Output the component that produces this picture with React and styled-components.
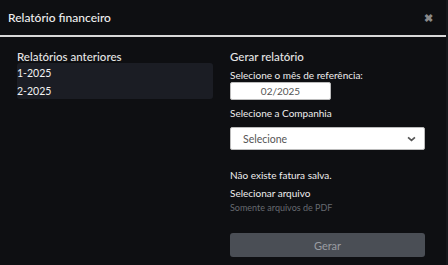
import React from "react";
import styled, { createGlobalStyle } from "styled-components";

const GlobalStyle = createGlobalStyle`
  html, body {
    margin: 0;
    padding: 0;
    background: #0e0f12;
  }
  body {
    font-family: Lato, "Open Sans", sans-serif;
    color: #e6e6e6;
  }
`;

const Modal = styled.div`
  width: 448px;
  height: 265px;
  background: #0e0f12;
  display: flex;
  flex-direction: column;
  box-sizing: border-box;
  border-right: 2px solid #15171b;
`;

const Header = styled.div`
  display: flex;
  align-items: center;
  justify-content: space-between;
  padding: 0 13px 0 8px;
  border-bottom: 2px solid #d8d8d8;
  box-sizing: border-box;
  height: 37px;
`;

const Title = styled.h1`
  margin: 0;
  font-size: 12px;
  font-weight: 500;
  color: #f0f0f0;
`;

const Close = styled.span`
  font-size: 11px;
  font-weight: 700;
  color: #8a8a8a;
  line-height: 1;
`;

const Body = styled.div`
  display: grid;
  grid-template-columns: 196px 195px;
  column-gap: 17px;
  padding: 13px 0 0 17px;
`;

const Column = styled.div`
  display: flex;
  flex-direction: column;
`;

const SectionTitle = styled.h2`
  margin: 0 0 ${(p) => p.gap || 0}px;
  font-size: 11.5px;
  font-weight: 500;
  color: #e6e6e6;
`;

const List = styled.div`
  background: #1b1d24;
  border-radius: 3px;
  padding: 4px 0 1px;
  display: flex;
  flex-direction: column;
  gap: 5px;
`;

const ListItem = styled.div`
  font-size: 10.5px;
  color: #f2f2f2;
  height: 13px;
  line-height: 13px;
`;

const Label = styled.label`
  font-size: 10px;
  color: #eeeeee;
  margin-bottom: ${(p) => p.mb || 0}px;
`;

const MonthInput = styled.div`
  width: 101px;
  height: 18px;
  box-sizing: border-box;
  background: #fff;
  border-radius: 2px;
  border: 1px solid #bbb;
  color: #555;
  font-size: 10px;
  display: flex;
  align-items: center;
  justify-content: center;
  margin-bottom: 7px;
`;

const Select = styled.div`
  height: 23px;
  box-sizing: border-box;
  background: #fff;
  border-radius: 2px;
  border: 1px solid #bbb;
  display: flex;
  align-items: center;
  justify-content: space-between;
  padding: 0 8px 0 12px;
  color: #555;
  font-size: 10.5px;
  margin-bottom: 19px;
`;

const Muted = styled.span`
  font-size: 9px;
  color: #666a70;
  margin-top: 3px;
  margin-bottom: 20px;
`;

const Button = styled.button`
  height: 24px;
  border: none;
  border-radius: 3px;
  background: #4a4e55;
  color: #9a9da2;
  font-family: inherit;
  font-size: 11px;
`;

function Chevron() {
  return (
    <svg width="9" height="6" viewBox="0 0 10 7">
      <path d="M1 1.5 L5 5 L9 1.5" stroke="#555" strokeWidth="2" fill="none" />
    </svg>
  );
}

export default function App() {
  return (
    <>
      <GlobalStyle />
      <Modal>
        <Header>
          <Title>Relatório financeiro</Title>
          <Close>✖</Close>
        </Header>
        <Body>
          <Column>
            <SectionTitle>Relatórios anteriores</SectionTitle>
            <List>
              <ListItem>1-2025</ListItem>
              <ListItem>2-2025</ListItem>
            </List>
          </Column>
          <Column>
            <SectionTitle gap={6}>Gerar relatório</SectionTitle>
            <Label mb={1}>Selecione o mês de referência:</Label>
            <MonthInput>02/2025</MonthInput>
            <Label mb={8}>Selecione a Companhia</Label>
            <Select>
              Selecione
              <Chevron />
            </Select>
            <Label mb={6}>Não existe fatura salva.</Label>
            <Label>Selecionar arquivo</Label>
            <Muted>Somente arquivos de PDF</Muted>
            <Button>Gerar</Button>
          </Column>
        </Body>
      </Modal>
    </>
  );
}
